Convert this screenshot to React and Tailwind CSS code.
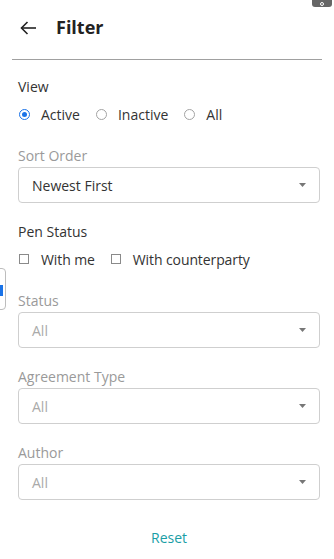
const Radio = ({ checked, label }) => (
  <label className="flex items-center">
    <span
      className={`flex h-[11px] w-[11px] items-center justify-center rounded-full border ${
        checked ? 'border-[#1a73e8]' : 'border-[#a3a3a3]'
      }`}
    >
      {checked ? <span className="h-[5px] w-[5px] rounded-full bg-[#1a73e8]" /> : null}
    </span>
    <span className="ml-[11px] text-[14px] text-[#333]">{label}</span>
  </label>
);

const Checkbox = ({ label }) => (
  <label className="flex items-center">
    <span className="h-[10px] w-[10px] border border-[#8a8a8a]" />
    <span className="ml-[12px] text-[14px] tracking-[-0.1px] text-[#333]">{label}</span>
  </label>
);

const Select = ({ value, placeholder }) => (
  <div className="mt-px flex h-[36px] items-center justify-between rounded-[4px] border border-[#cfcfcf] pl-[13px] pr-[13px]">
    <span className={`text-[14px] ${placeholder ? 'text-[#aaa]' : 'text-[#333]'}`}>{value}</span>
    <svg width="7" height="4" viewBox="0 0 7 4">
      <path d="M0 0H7L3.5 4Z" fill="#777" />
    </svg>
  </div>
);

const Label = ({ children, muted, className = '' }) => (
  <p className={`h-[20px] text-[14px] leading-[20px] ${muted ? 'text-[#9a9a9a]' : 'text-[#333]'} ${className}`}>
    {children}
  </p>
);

export default function App() {
  return (
    <div
      className="relative min-h-[559px] w-[334px] overflow-hidden bg-white"
      style={{ fontFamily: '"Open Sans", "Noto Sans", sans-serif' }}
    >
      <div className="absolute right-[2px] top-[-3px] flex h-[10px] w-[20px] items-end justify-center rounded-[3px] bg-[#666]">
        <span className="mb-[1px] h-[4px] w-[4px] rounded-full border border-white" />
      </div>

      <div className="absolute left-[-4px] top-[268px] h-[42px] w-[10px] rounded-[4px] border border-[#bdbdbd] bg-white">
        <span className="absolute left-[3px] top-[16px] h-[11px] w-[3px] bg-[#1a73e8]" />
      </div>

      <header className="mx-3 flex h-[60px] items-center border-b border-[#a0a0a0] pb-[4px] pl-[8px]">
        <svg width="17" height="14" viewBox="0 0 17 14" fill="none" stroke="#222" strokeWidth="1.6">
          <path d="M16 7H1.5" />
          <path d="M7.5 1L1.5 7l6 6" />
        </svg>
        <h1 className="ml-[19px] text-[18px] font-bold text-[#222]">Filter</h1>
      </header>

      <div className="pl-[18px] pr-[14px]">
        <Label className="mt-[17px]">View</Label>
        <div className="mt-[7px] flex h-[20px] items-center gap-4 pl-px">
          <Radio checked label="Active" />
          <Radio label="Inactive" />
          <Radio label="All" />
        </div>

        <Label muted className="mt-[22px]">Sort Order</Label>
        <Select value="Newest First" />

        <Label className="mt-[19px]">Pen Status</Label>
        <div className="mt-[7px] flex h-[20px] items-center gap-4 pl-px">
          <Checkbox label="With me" />
          <Checkbox label="With counterparty" />
        </div>

        <Label muted className="mt-[22px]">Status</Label>
        <Select value="All" placeholder />

        <Label muted className="mt-[19px]">Agreement Type</Label>
        <Select value="All" placeholder />

        <Label muted className="mt-[19px]">Author</Label>
        <Select value="All" placeholder />

        <div className="mt-[28px] flex justify-center pb-4">
          <button className="text-[14px] leading-[20px] text-[#1a9ea6]">Reset</button>
        </div>
      </div>
    </div>
  );
}
